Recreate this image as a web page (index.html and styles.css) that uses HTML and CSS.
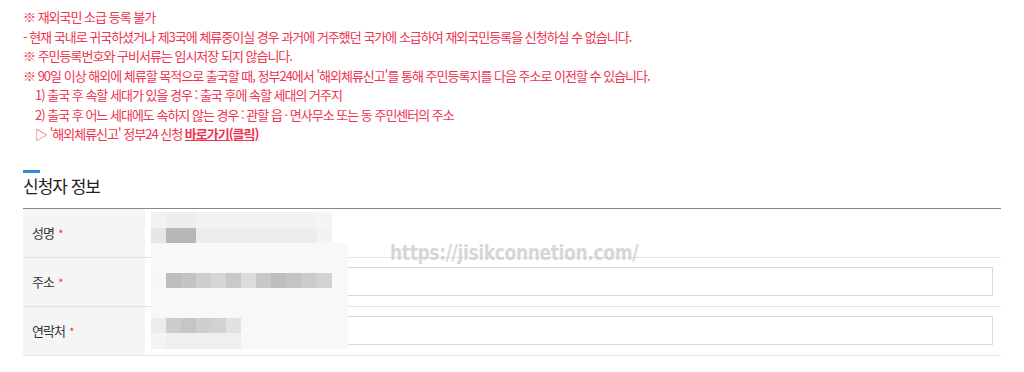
FILE: index.html
```html
<!DOCTYPE html>
<html lang="ko">
<head>
<meta charset="utf-8">
<title>신청자 정보</title>
<link rel="stylesheet" href="styles.css">
</head>
<body>
<div class="page">
  <div class="notes">
    <p>※ 재외국민 소급 등록 불가</p>
    <p>- 현재 국내로 귀국하셨거나 제3국에 체류중이실 경우 과거에 거주했던 국가에 소급하여 재외국민등록을 신청하실 수 없습니다.</p>
    <p>※ 주민등록번호와 구비서류는 임시저장 되지 않습니다.</p>
    <p>※ 90일 이상 해외에 체류할 목적으로 출국할 때, 정부24에서 '해외체류신고'를 통해 주민등록지를 다음 주소로 이전할 수 있습니다.</p>
    <p class="indent">1) 출국 후 속할 세대가 있을 경우 : 출국 후에 속할 세대의 거주지</p>
    <p class="indent">2) 출국 후 어느 세대에도 속하지 않는 경우 : 관할 읍 · 면사무소 또는 동 주민센터의 주소</p>
    <p class="indent">▷ '해외체류신고' 정부24 신청 <a class="link" href="#">바로가기(클릭)</a></p>
  </div>

  <div class="section">
    <div class="bar"></div>
    <h2 class="title">신청자 정보</h2>
  </div>

  <div class="form">
    <div class="row">
      <div class="label">성명<span class="req">*</span></div>
      <div class="field"></div>
    </div>
    <div class="row">
      <div class="label">주소<span class="req">*</span></div>
      <div class="field"><div class="input"></div></div>
    </div>
    <div class="row">
      <div class="label">연락처<span class="req">*</span></div>
      <div class="field"><div class="input"></div></div>
    </div>

    <div class="mosaic">
      <div class="m-line m-top1">
        <span class="c1" style="width:15px"></span><span class="c2" style="width:30px"></span><span class="c1" style="width:121px"></span><span class="c0" style="width:15px"></span>
      </div>
      <div class="m-line m-top2">
        <span style="width:15px;background:#e6e6e6"></span><span style="width:30px;background:#b7b7b7"></span><span style="width:121px;background:#ececec"></span><span style="width:15px;background:#f2f2f2"></span>
      </div>
      <div class="m-line m-fill" style="height:30px"></div>
      <div class="m-line m-fill">
        <span style="width:15px;background:#f7f7f7"></span>
        <span style="width:15px;background:#bdbdbd"></span><span style="width:15px;background:#c3c3c3"></span><span style="width:15px;background:#cfcfcf"></span><span style="width:15px;background:#d6d6d6"></span><span style="width:15px;background:#c9c9c9"></span><span style="width:15px;background:#dcdcdc"></span><span style="width:15px;background:#c8c8c8"></span><span style="width:15px;background:#bebebe"></span><span style="width:15px;background:#c4c4c4"></span><span style="width:15px;background:#cbcbcb"></span><span style="width:16px;background:#d2d2d2"></span>
      </div>
      <div class="m-line m-fill" style="height:30px"></div>
      <div class="m-line m-fill">
        <span style="width:15px;background:#ececec"></span>
        <span style="width:15px;background:#cccccc"></span><span style="width:15px;background:#c6c6c6"></span><span style="width:15px;background:#cfcfcf"></span><span style="width:15px;background:#d2d2d2"></span><span style="width:15px;background:#e2e2e2"></span>
      </div>
      <div class="m-line m-fill">
        <span style="width:15px;background:#f4f4f4"></span><span style="width:75px;background:#efefef"></span>
      </div>
    </div>
  </div>

  <div class="watermark">https://jisikconnetion.com/</div>
</div>
</body>
</html>
```
FILE: styles.css
```css
* { box-sizing: border-box; }
html, body { margin: 0; padding: 0; background: #fff; }
body {
  font-family: "Noto Sans CJK KR", "Noto Sans", sans-serif;
  color: #333;
}
.page {
  position: relative;
  padding: 7px 23px 0 23px;
}
.notes {
  color: #f0334f;
  font-size: 13px;
  line-height: 19.5px;
  letter-spacing: -1px;
}
.notes p { margin: 0; white-space: nowrap; }
.notes .indent { padding-left: 12px; }
.link {
  color: #f0334f;
  font-weight: bold;
  text-decoration: underline;
}
.section { margin-top: 26px; }
.bar {
  width: 17px;
  height: 3px;
  background: #2d8be0;
}
.title {
  margin: 2px 0 0 0;
  font-size: 17px;
  line-height: 22px;
  font-weight: 400;
  color: #222;
  letter-spacing: -1px;
}
.form {
  position: relative;
  margin-top: 11px;
  border-top: 1px solid #8a8a8a;
}
.row {
  display: grid;
  grid-template-columns: 122px 1fr;
  height: 49px;
  border-bottom: 1px solid #e3e3e3;
}
.label {
  background: #f5f5f5;
  padding-left: 9px;
  display: flex;
  align-items: center;
  font-size: 13px;
  letter-spacing: -0.9px;
  color: #333;
}
.req {
  color: #f0334f;
  font-size: 11px;
  margin-left: 4px;
  margin-top: 1px;
}
.field {
  display: flex;
  align-items: center;
  padding: 0 8px 0 10px;
}
.input {
  width: 100%;
  height: 29px;
  border: 1px solid #d9d9d9;
  background: #fff;
}
.mosaic {
  position: absolute;
  left: 128px;
  top: 3px;
  width: 197px;
  height: 137px;
  display: flex;
  flex-direction: column;
}
.m-line { display: flex; height: 15px; }
.m-line span { display: block; height: 100%; }
.m-top1, .m-top2 { width: 181px; }
.m-top1 .c0 { background: #f5f5f5; }
.m-top1 .c1 { background: #f2f2f2; }
.m-top1 .c2 { background: #eeeeee; }
.m-top1 { height: 16px; }
.m-fill { background: #f8f8f8; width: 197px; }
.m-line.m-fill:last-child { height: 16px; }
.watermark {
  position: absolute;
  left: 390px;
  top: 240px;
  font-family: "DejaVu Sans", sans-serif;
  font-weight: bold;
  font-size: 22px;
  line-height: 25px;
  color: rgba(200, 200, 200, 0.72);
  letter-spacing: -0.5px;
  transform: scaleX(0.78);
  transform-origin: left top;
  white-space: nowrap;
}
```
